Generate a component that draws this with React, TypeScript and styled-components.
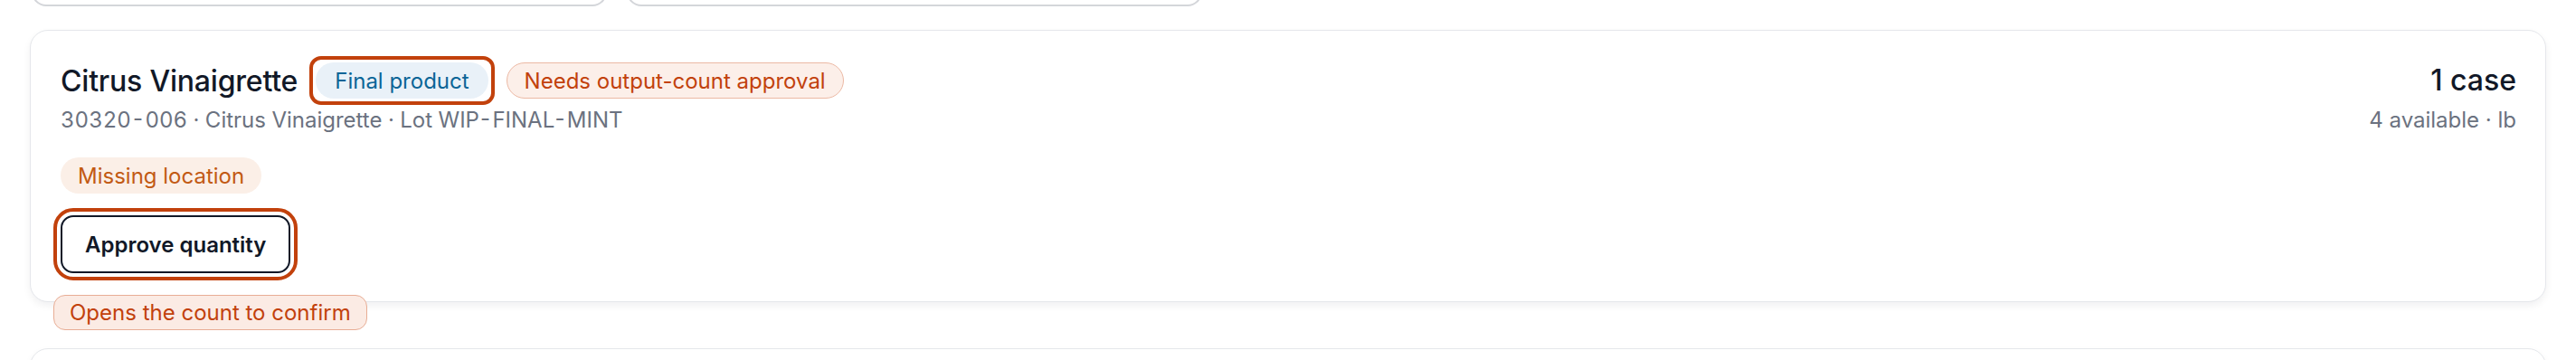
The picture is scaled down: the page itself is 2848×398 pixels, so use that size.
import React from 'react';
import styled, { createGlobalStyle } from 'styled-components';

const GlobalStyle = createGlobalStyle`
  html, body {
    margin: 0;
    padding: 0;
    background: #ffffff;
  }
  body {
    font-family: 'Inter', 'Liberation Sans', sans-serif;
    color: #111827;
  }
`;

const SPage = styled.div`
  padding: 0 33px;
`;

const SPrevRow = styled.div`
  display: flex;
  gap: 22px;
  height: 40px;
  margin-top: -33px;
  padding-left: 2px;
`;

const SPrevBox = styled.div`
  width: 632px;
  border: 2px solid #d4d6da;
  border-top: none;
  border-radius: 0 0 16px 16px;
`;

const SCard = styled.div<{ $top: number }>`
  position: relative;
  margin-top: ${(p) => p.$top}px;
  display: flex;
  justify-content: space-between;
  align-items: flex-start;
  padding: 32px 32px 31px 33px;
  border: 1px solid #e5e7eb;
  border-radius: 20px;
  background: #ffffff;
  box-shadow: 0 4px 8px rgba(15, 23, 42, 0.06);
`;

const SMain = styled.div`
  display: flex;
  flex-direction: column;
`;

const SHeadRow = styled.div`
  display: flex;
  align-items: center;
  gap: 20px;
  height: 46px;
`;

const STitle = styled.div`
  font-size: 32px;
  font-weight: 500;
  color: #111827;
  letter-spacing: -0.2px;
`;

const SBadge = styled.span<{ $tone: 'blue' | 'warn' | 'soft'; $ring?: boolean }>`
  position: relative;
  display: inline-flex;
  align-items: center;
  height: 40px;
  padding: 0 ${(p) => (p.$ring ? 21 : 19)}px;
  box-sizing: border-box;
  border-radius: 999px;
  font-size: 24px;
  white-space: nowrap;
  background: ${(p) =>
    p.$tone === 'blue' ? '#e9f1f8' : p.$tone === 'warn' ? '#fcefe9' : '#fbefe7'};
  color: ${(p) =>
    p.$tone === 'blue' ? '#0b6597' : p.$tone === 'warn' ? '#c2410c' : '#c25a14'};
  border: ${(p) => (p.$tone === 'warn' ? '1.5px solid #ecb9a4' : 'none')};

  &::after {
    content: '';
    display: ${(p) => (p.$ring ? 'block' : 'none')};
    position: absolute;
    inset: -7px;
    border: 4px solid #c2410c;
    border-radius: 13px;
  }
`;

const SSub = styled.div`
  margin-top: 4px;
  font-size: 24px;
  line-height: 34px;
  font-variant-numeric: tabular-nums;
  color: #6b7280;
`;

const SFlags = styled.div`
  margin-top: 24px;
  display: flex;
`;

const SActions = styled.div`
  position: relative;
  margin-top: 24px;
  display: flex;
`;

const SButton = styled.button`
  height: 64px;
  padding: 0 25px;
  border: 2px solid #111827;
  border-radius: 14px;
  background: #ffffff;
  color: #111827;
  font-family: 'Inter', 'Liberation Sans', sans-serif;
  font-size: 24px;
  font-weight: 600;
  outline: 4px solid #c2410c;
  outline-offset: 4px;
`;

const STip = styled.div`
  position: absolute;
  left: -8px;
  top: 88px;
  height: 39px;
  box-sizing: border-box;
  display: flex;
  align-items: center;
  padding: 0 17px;
  border: 1.5px solid #e8ad95;
  border-radius: 13px;
  background: #fbebe4;
  color: #c2410c;
  font-size: 24px;
  white-space: nowrap;
  z-index: 2;
`;

const SQty = styled.div`
  display: flex;
  flex-direction: column;
  align-items: flex-end;
`;

const SQtyValue = styled.div`
  font-size: 32px;
  font-weight: 500;
  line-height: 46px;
  color: #111827;
`;

const SQtyNote = styled.div`
  margin-top: 4px;
  font-size: 24px;
  line-height: 34px;
  color: #6b7280;
`;

export default function App() {
  return (
    <>
      <GlobalStyle />
      <SPage>
        <SPrevRow>
          <SPrevBox />
          <SPrevBox />
        </SPrevRow>
        <SCard $top={26}>
          <SMain>
            <SHeadRow>
              <STitle>Citrus Vinaigrette</STitle>
              <SBadge $tone="blue" $ring>
                Final product
              </SBadge>
              <SBadge $tone="warn">Needs output-count approval</SBadge>
            </SHeadRow>
            <SSub>30320-006 · Citrus Vinaigrette · Lot WIP-FINAL-MINT</SSub>
            <SFlags>
              <SBadge $tone="soft">Missing location</SBadge>
            </SFlags>
            <SActions>
              <SButton>Approve quantity</SButton>
              <STip>Opens the count to confirm</STip>
            </SActions>
          </SMain>
          <SQty>
            <SQtyValue>1 case</SQtyValue>
            <SQtyNote>4 available · lb</SQtyNote>
          </SQty>
        </SCard>
        <SCard $top={51} style={{ height: 200 }} />
      </SPage>
    </>
  );
}
